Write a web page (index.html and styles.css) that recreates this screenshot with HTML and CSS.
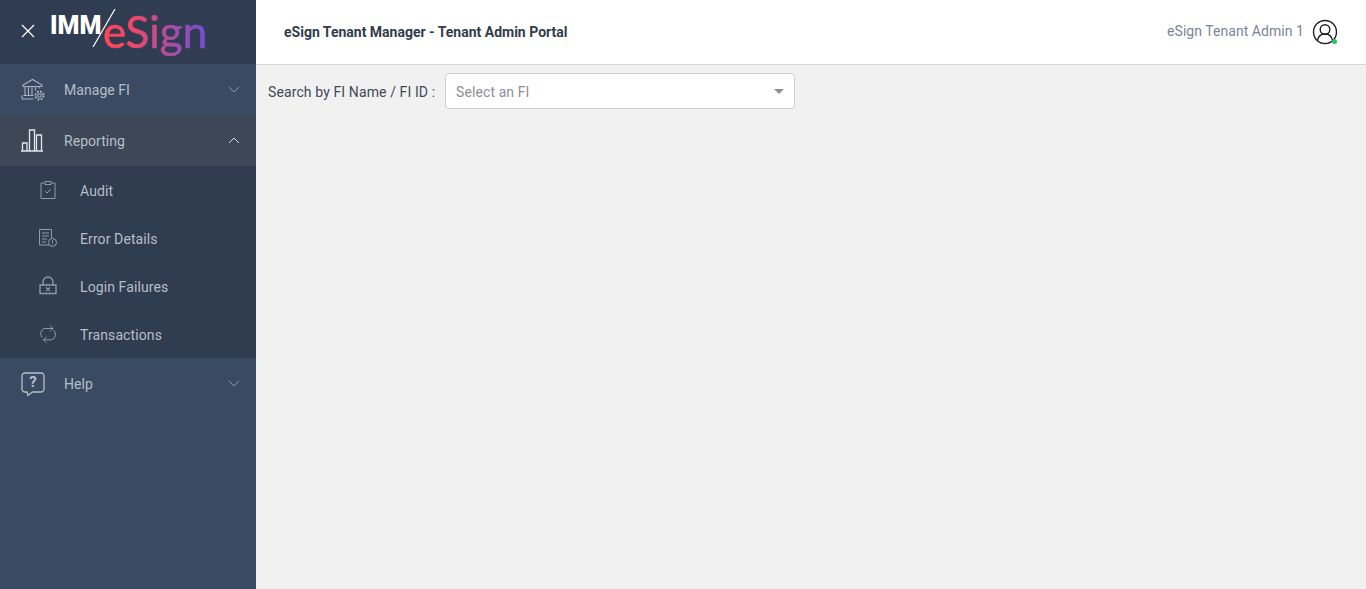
FILE: index.html
```html
<!DOCTYPE html>
<html lang="en">
<head>
<meta charset="utf-8">
<title>eSign Tenant Manager</title>
<link rel="stylesheet" href="styles.css">
</head>
<body>
<div class="app">
  <aside class="sidebar">
    <div class="brand">
      <svg class="close" width="16" height="16" viewBox="0 0 16 16"><path d="M2 2l12 12M14 2L2 14"/></svg>
      <div class="logo">
        <span class="imm">IMM</span>
        <svg class="slash" width="24" height="38" viewBox="0 0 24 38"><path d="M23 0L1 38"/></svg>
        <span class="esign">eSign</span>
      </div>
    </div>
    <nav>
      <a class="item">
        <svg class="ico" width="26" height="26" viewBox="0 0 26 26"><path d="M3 8L12.500 2.500 22 8v1.500H3zM5 9.500v9M8.500 9.500v9M12 9.500v9M15.500 9.500v4M19 9.500v2M3.500 18.500h10M2 22h11.500M2 22v-3.500"/><circle cx="19.500" cy="18.500" r="1.800"/><circle cx="19.500" cy="18.500" r="4" stroke-dasharray="1.800 1.340" stroke-width="2"/></svg>
        <span class="lbl">Manage FI</span>
        <svg class="chev" width="12" height="7" viewBox="0 0 12 7"><path d="M1 1l5 5 5-5"/></svg>
      </a>
      <a class="item open">
        <svg class="ico" width="26" height="26" viewBox="0 0 26 26"><path class="bright" d="M1 23h22M2.500 23v-8h4.500v8M9.500 23V2h5v21M16.500 23V7h5v16"/></svg>
        <span class="lbl">Reporting</span>
        <svg class="chev up" width="12" height="7" viewBox="0 0 12 7"><path d="M1 6l5-5 5 5"/></svg>
      </a>
      <div class="sub">
        <a class="subitem">
          <svg class="sico" width="20" height="20" viewBox="0 0 20 20"><path d="M6.500 3H3v15.500h14V3h-3.500M7 1.500h6v3H7zM7 11l2 2 4-4"/></svg>
          <span class="lbl">Audit</span>
        </a>
        <a class="subitem">
          <svg class="sico" width="20" height="20" viewBox="0 0 20 20"><path d="M11 17H1.500V1.500h12V10M4 5h7M4 8h7M4 11h5M4 14h4"/><circle cx="14.500" cy="14.500" r="4"/><path d="M14.500 12.200v2.800M14.500 16v.8"/></svg>
          <span class="lbl">Error Details</span>
        </a>
        <a class="subitem">
          <svg class="sico lock" width="20" height="20" viewBox="0 0 20 20"><path d="M5 9V6a5 5 0 0 1 10 0v3M2 9h16v8.500H2zM8 11.500l4 3.500M12 11.500l-4 3.500"/></svg>
          <span class="lbl">Login Failures</span>
        </a>
        <a class="subitem">
          <svg class="sico" width="20" height="20" viewBox="0 0 20 20"><path d="M4 13.500A6 6 0 0 1 6 4.500h9M12 1.500L15 4.500 12 7.500M16 6.500a6 6 0 0 1-2 9.300H5.500M8.500 12.800l-3 3 3 3"/></svg>
          <span class="lbl">Transactions</span>
        </a>
      </div>
      <a class="item">
        <svg class="ico help" width="26" height="26" viewBox="0 0 26 26"><path d="M4.500 2h17A3 3 0 0 1 24 4.500v14a3 3 0 0 1-3 2.500h-8.500l-4.500 3.500-1-3.500H4.500A3 3 0 0 1 2 18.500v-14A3 3 0 0 1 4.500 2z"/><text x="13" y="16" class="q">?</text></svg>
        <span class="lbl">Help</span>
        <svg class="chev" width="12" height="7" viewBox="0 0 12 7"><path d="M1 1l5 5 5-5"/></svg>
      </a>
    </nav>
  </aside>
  <main class="main">
    <header class="top">
      <div class="title">eSign Tenant Manager - Tenant Admin Portal</div>
      <div class="user">
        <span class="uname">eSign Tenant Admin 1</span>
        <span class="avatar">
          <svg width="26" height="26" viewBox="0 0 26 26"><circle cx="13" cy="13" r="11.500"/><circle cx="13" cy="10.500" r="4.800"/><path d="M5.500 21.500c.8-4.500 3.500-6.500 7.500-6.500s6.700 2 7.500 6.500"/></svg>
          <i class="dot"></i>
        </span>
      </div>
    </header>
    <section class="search">
      <label class="slabel">Search by FI Name / FI ID :</label>
      <div class="select">
        <span class="ph">Select an FI</span>
        <i class="caret"></i>
      </div>
    </section>
  </main>
</div>
</body>
</html>
```
FILE: styles.css
```css
* { box-sizing: border-box; }
html, body { margin: 0; height: 100%; }
body { font-family: Roboto, "Liberation Sans", sans-serif; overflow: hidden; }
.app { display: flex; height: 589px; }

.sidebar { width: 256px; flex: none; background: #3a4a63; display: flex; flex-direction: column; }
.brand { height: 64px; background: #303c52; display: flex; align-items: center; padding-left: 20px; }
.close { fill: none; stroke: #fff; stroke-width: 1.300; margin-top: -3px; }
.logo { display: flex; align-items: center; position: relative; margin-left: 15px; height: 64px; width: 160px; }
.imm { color: #fff; font: 900 25px/1 Roboto, sans-serif; letter-spacing: 0; position: absolute; left: -1px; top: 13px; }
.slash { position: absolute; left: 41px; top: 9px; fill: none; stroke: #fff; stroke-width: 1.200; }
.esign { position: absolute; left: 52px; top: 6px; font: 400 44px/50px Lato, Roboto, sans-serif; letter-spacing: 0;
  background: linear-gradient(90deg, #ff4757 0%, #f0486a 30%, #a54ea8 68%, #6f4fd0 100%);
  -webkit-background-clip: text; background-clip: text; color: transparent; -webkit-text-stroke: .6px transparent; }

nav { display: flex; flex-direction: column; }
.item { height: 51px; display: flex; align-items: center; padding-left: 20px; position: relative; }
.item.open { background: #3d4757; }
.item .lbl { margin-left: 18px; }
.lbl { color: #b7bec9; font-size: 14px; letter-spacing: .05px; }
.ico { fill: none; stroke: #a9b0bb; stroke-width: 1.100; flex: none; }
.ico .bright { stroke: #e3e6ea; stroke-width: 1.300; }
.help { stroke-width: 1.300; stroke: #b7bec9; }
.q { font: 700 15px Roboto, sans-serif; fill: #b7bec9; stroke: none; text-anchor: middle; }
.chev { position: absolute; right: 16px; top: 22px; fill: none; stroke: #8f99a8; stroke-width: 1; }
.chev.up { stroke: #d8dce2; }
.sub { background: #303c50; height: 192px; display: flex; flex-direction: column; }
.subitem { height: 48px; display: flex; align-items: center; padding-left: 38px; }
.subitem .lbl { margin-left: 22px; margin-top: 2px; letter-spacing: .1px; }
.sico { fill: none; stroke: #949ba7; stroke-width: 1; flex: none; }
.lock { stroke-width: 1.300; }

.main { flex: 1; background: #f1f1f1; display: flex; flex-direction: column; }
.top { height: 65px; background: #fff; border-bottom: 1px solid #d4d7dc; display: flex; align-items: center; justify-content: space-between; padding: 0 28px; }
.title { font-size: 14px; font-weight: 700; color: #333c4c; margin-top: -1px; }
.user { display: flex; align-items: center; gap: 8px; }
.uname { font-size: 14px; color: #7d8593; letter-spacing: .05px; margin-top: -2px; }
.avatar { position: relative; width: 26px; height: 26px; display: block; }
.avatar svg { fill: none; stroke: #1d1f24; stroke-width: 1.400; display: block; }
.dot { position: absolute; right: 1px; bottom: 1px; width: 5px; height: 5px; border-radius: 50%; background: #27c266; }

.search { display: flex; align-items: center; padding: 8px 0 0 12px; }
.slabel { font-size: 14px; color: #414958; width: 177px; flex: none; margin-top: 2px; letter-spacing: .11px; }
.select { width: 350px; height: 36px; background: #fff; border: 1px solid #cfd0d3; border-radius: 4px; display: flex; align-items: center; justify-content: space-between; padding: 0 10px 0 10px; }
.ph { font-size: 14px; color: #8f8f92; margin-top: 2px; letter-spacing: .1px; }
.caret { width: 0; height: 0; border-left: 5px solid transparent; border-right: 5px solid transparent; border-top: 5px solid #8f8f92; }
```
